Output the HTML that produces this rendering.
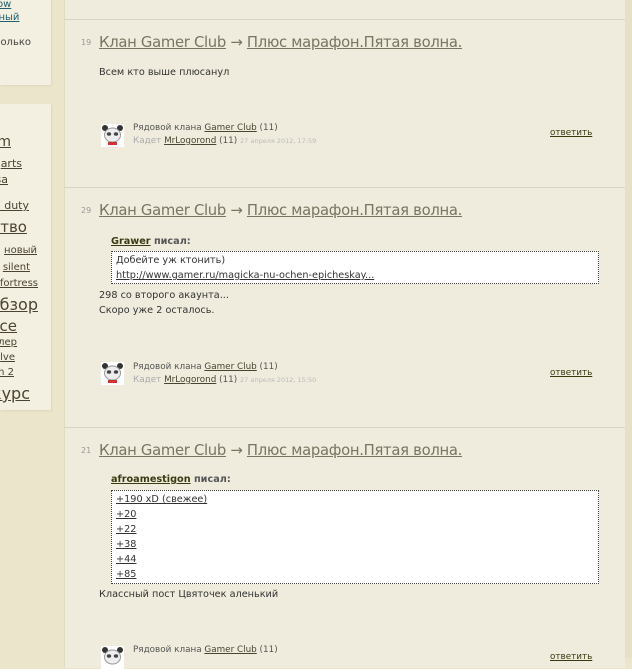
<!DOCTYPE html>
<html><head><meta charset="utf-8"><style>
body{margin:0;width:632px;height:658px;overflow:hidden;background:#ebe5cc;font-family:"DejaVu Sans","Liberation Sans",sans-serif;position:relative;color:#333}
a{color:#4a4430}
.sb{position:absolute;left:0;width:51px;background:#f3efe1;box-shadow:1px 1px 2px #ddd6bc;overflow:hidden}
.sb div{position:absolute;white-space:nowrap}
.main{position:absolute;left:64px;top:-2px;width:560px;height:670px;background:#efecdd;border-left:1px solid #e1dbc3}
.rb{position:absolute;left:624px;top:0;width:8px;height:658px;background:#e6e0c6}
.sep{position:absolute;left:0;width:560px;height:1px;background:#d9d4c0}
.num{position:absolute;left:16px;font-size:8px;color:#999}
.t{position:absolute;left:34px;font-size:14.8px;color:#7a7560;white-space:nowrap;letter-spacing:-0.3px}
.t a{color:#7a7560}
.tx{position:absolute;left:34px;font-size:9.7px;color:#333;line-height:15px}
.q{position:absolute;left:46px;font-size:9.7px}
.q b{color:#555}
.q b a{color:#3a3a10}
.qb{position:absolute;left:46px;width:488px;background:#fff;border:1px dotted #444;font-size:9.7px;line-height:15px;padding:1px 4px;box-sizing:border-box}
.qb a{color:#333}
.av{position:absolute;left:36px;width:23px;height:23px}
.meta{position:absolute;left:68px;font-size:8.8px;line-height:13px;color:#555;white-space:nowrap}
.meta .g{color:#aaa}.meta .d{color:#bbb;font-size:6.5px}
.rep{position:absolute;left:485px;font-size:8.8px;color:#3a3a10}
</style></head><body>
<div class="sb" style="top:-5px;height:90px;font-size:10px">
<div style="left:-3px;top:4px"><a href="#" style="color:#206070">ow</a></div>
<div style="left:-8px;top:17px"><a href="#" style="color:#206070">иный</a></div>
<div style="right:20px;top:42px;color:#444">олько</div>
</div>
<div class="sb" style="top:104px;height:306px">
<div style="right:40px;top:30px;font-size:14px"><a href="#">m</a></div>
<div style="right:29px;top:53px;font-size:11px"><a href="#">arts</a></div>
<div style="right:43px;top:69px;font-size:11px"><a href="#">sa</a></div>
<div style="right:22px;top:95px;font-size:11px"><a href="#">F duty</a></div>
<div style="right:24px;top:114px;font-size:15px"><a href="#">ство</a></div>
<div style="right:14px;top:141px;font-size:10px"><a href="#">новый</a></div>
<div style="right:21px;top:158px;font-size:10px"><a href="#">silent</a></div>
<div style="right:13px;top:174px;font-size:10px"><a href="#">fortress</a></div>
<div style="right:13px;top:191px;font-size:16px"><a href="#">обзор</a></div>
<div style="right:34px;top:213px;font-size:15px"><a href="#">нсе</a></div>
<div style="right:34px;top:233px;font-size:10px"><a href="#">лер</a></div>
<div style="right:36px;top:248px;font-size:10px"><a href="#">lve</a></div>
<div style="right:37px;top:263px;font-size:10px"><a href="#">n 2</a></div>
<div style="right:21px;top:280px;font-size:16px"><a href="#">курс</a></div>
</div>
<div class="rb"></div>
<div class="main">
<div class="sep" style="top:21px"></div>
<div class="sep" style="top:189px"></div>
<div class="sep" style="top:429px"></div>

<div class="num" style="top:40px">19</div>
<div class="t" style="top:36px"><a href="#">Клан Gamer Club</a> → <a href="#">Плюс марафон.Пятая волна.</a></div>
<div class="tx" style="top:67px">Всем кто выше плюсанул</div>
<svg class="av" style="top:126px" viewBox="0 0 23 23"><rect width="23" height="23" fill="#fff"/><circle cx="4" cy="4" r="3" fill="#333"/><circle cx="19" cy="4" r="3" fill="#333"/><ellipse cx="11.5" cy="11" rx="8" ry="7" fill="#eee" stroke="#999"/><ellipse cx="8" cy="10" rx="2.2" ry="1.8" fill="#444"/><ellipse cx="15" cy="10" rx="2.2" ry="1.8" fill="#444"/><rect x="7" y="18" width="9" height="3" fill="#c33"/></svg>
<div class="meta" style="top:124px">Рядовой клана <a href="#">Gamer Club</a> (11)<br><span class="g">Кадет</span> <a href="#">MrLogorond</a> (11) <span class="d">27 апреля 2012, 17:59</span></div>
<div class="rep" style="top:130px"><a href="#" style="color:#3a3a10">ответить</a></div>

<div class="num" style="top:208px">29</div>
<div class="t" style="top:204px"><a href="#">Клан Gamer Club</a> → <a href="#">Плюс марафон.Пятая волна.</a></div>
<div class="q" style="top:238px"><b><a href="#">Grawer</a> писал:</b></div>
<div class="qb" style="top:253px;height:33px">Добейте уж ктонить)<br><a href="#">http://www.gamer.ru/magicka-nu-ochen-epicheskay...</a></div>
<div class="tx" style="top:290px">298 со второго акаунта...<br>Скоро уже 2 осталось.</div>
<svg class="av" style="top:364px" viewBox="0 0 23 23"><rect width="23" height="23" fill="#fff"/><circle cx="4" cy="4" r="3" fill="#333"/><circle cx="19" cy="4" r="3" fill="#333"/><ellipse cx="11.5" cy="11" rx="8" ry="7" fill="#eee" stroke="#999"/><ellipse cx="8" cy="10" rx="2.2" ry="1.8" fill="#444"/><ellipse cx="15" cy="10" rx="2.2" ry="1.8" fill="#444"/><rect x="7" y="18" width="9" height="3" fill="#c33"/></svg>
<div class="meta" style="top:363px">Рядовой клана <a href="#">Gamer Club</a> (11)<br><span class="g">Кадет</span> <a href="#">MrLogorond</a> (11) <span class="d">27 апреля 2012, 15:50</span></div>
<div class="rep" style="top:370px"><a href="#" style="color:#3a3a10">ответить</a></div>

<div class="num" style="top:448px">21</div>
<div class="t" style="top:444px"><a href="#">Клан Gamer Club</a> → <a href="#">Плюс марафон.Пятая волна.</a></div>
<div class="q" style="top:476px"><b><a href="#">afroamestigon</a> писал:</b></div>
<div class="qb" style="top:492px;height:94px"><a href="#">+190 xD (свежее)</a><br><a href="#">+20</a><br><a href="#">+22</a><br><a href="#">+38</a><br><a href="#">+44</a><br><a href="#">+85</a></div>
<div class="tx" style="top:589px">Классный пост Цвяточек аленький</div>
<svg class="av" style="top:648px" viewBox="0 0 23 23"><rect width="23" height="23" fill="#fff"/><circle cx="4" cy="4" r="3" fill="#333"/><circle cx="19" cy="4" r="3" fill="#333"/><ellipse cx="11.5" cy="11" rx="8" ry="7" fill="#eee" stroke="#999"/><ellipse cx="8" cy="10" rx="2.2" ry="1.8" fill="#444"/><ellipse cx="15" cy="10" rx="2.2" ry="1.8" fill="#444"/></svg>
<div class="meta" style="top:646px">Рядовой клана <a href="#">Gamer Club</a> (11)</div>
<div class="rep" style="top:654px"><a href="#" style="color:#3a3a10">ответить</a></div>
</div>
</body></html>
